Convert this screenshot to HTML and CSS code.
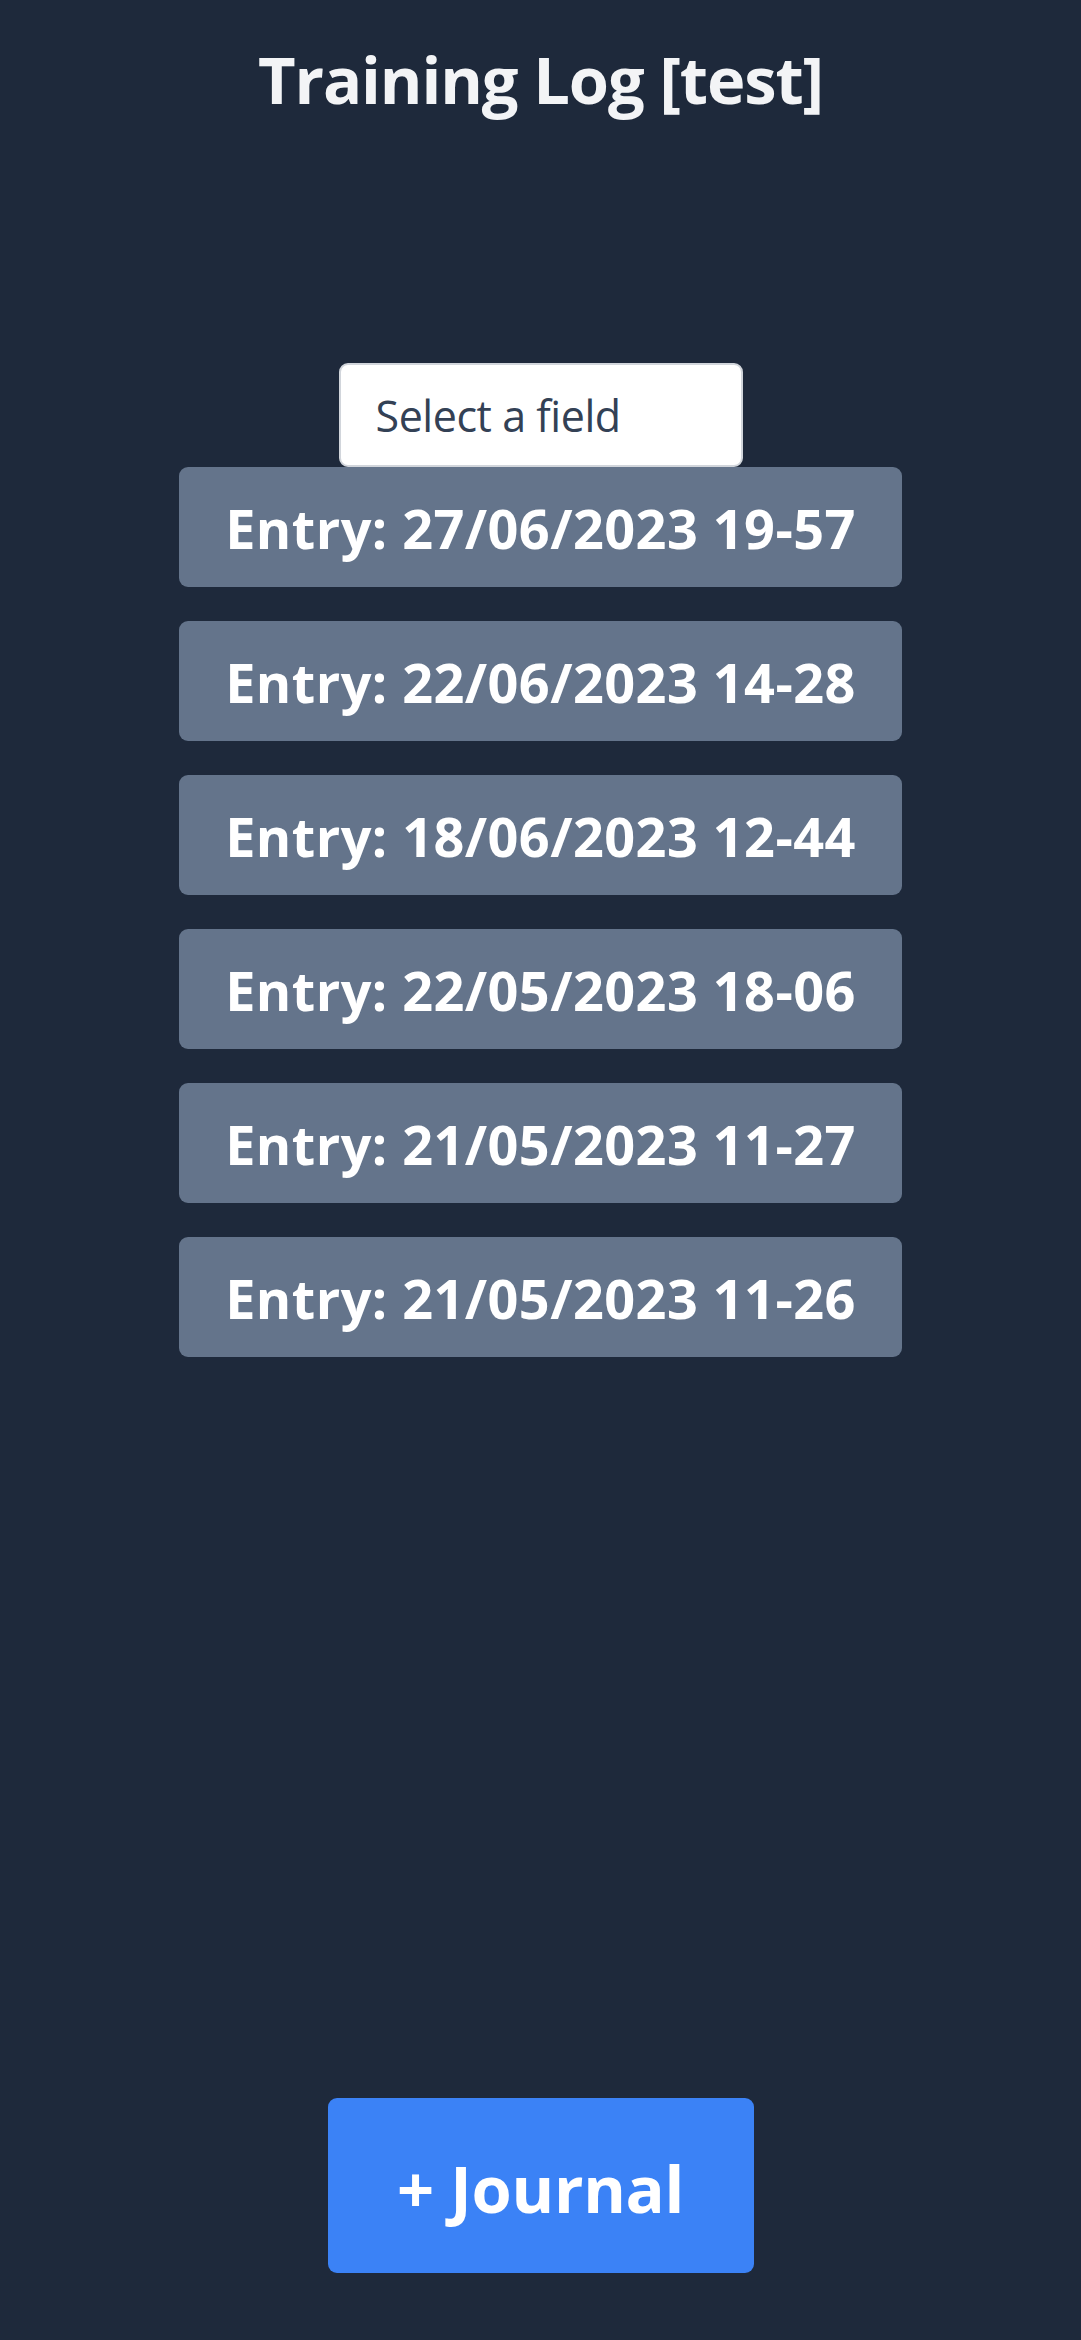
FILE: index.html
```html
<!DOCTYPE html>
<html lang="en">
<head>
<meta charset="utf-8">
<title>Training Log [test]</title>
<link rel="stylesheet" href="styles.css">
</head>
<body>
<div class="app">
  <h1 class="title">Training Log [test]</h1>
  <select class="field-select">
    <option>Select a field</option>
  </select>
  <ul class="entries">
    <li class="entry">Entry: 27/06/2023 19-57</li>
    <li class="entry">Entry: 22/06/2023 14-28</li>
    <li class="entry">Entry: 18/06/2023 12-44</li>
    <li class="entry">Entry: 22/05/2023 18-06</li>
    <li class="entry">Entry: 21/05/2023 11-27</li>
    <li class="entry">Entry: 21/05/2023 11-26</li>
  </ul>
  <button class="journal-btn">+ Journal</button>
</div>
</body>
</html>
```

FILE: styles.css
```css
html, body {
  margin: 0;
  padding: 0;
  background: #1e293b;
}

body {
  font-family: "Open Sans", "Noto Sans", sans-serif;
}

.app {
  min-height: 2340px;
  display: flex;
  flex-direction: column;
  align-items: center;
  box-sizing: border-box;
}

.title {
  margin: 47px 0 0;
  font-size: 65px;
  line-height: 65px;
  letter-spacing: -1.1px;
  font-weight: 700;
  color: #f3f4f6;
}

.field-select {
  margin-top: 251px;
  width: 404px;
  height: 104px;
  box-sizing: border-box;
  appearance: none;
  -webkit-appearance: none;
  background: #ffffff;
  border: 2px solid #d1d5db;
  border-radius: 9px;
  padding: 0 0 0 35px;
  font-family: "Open Sans", "Noto Sans", sans-serif;
  font-size: 43px;
  letter-spacing: -0.45px;
  color: #334155;
  outline: none;
}

.entries {
  list-style: none;
  margin: 0;
  padding: 0;
  display: flex;
  flex-direction: column;
  gap: 34px;
}

.entry {
  width: 723px;
  height: 120px;
  box-sizing: border-box;
  padding-top: 2px;
  display: flex;
  align-items: center;
  justify-content: center;
  background: #64748b;
  border-radius: 9px;
  color: #ffffff;
  font-size: 54px;
  font-weight: 700;
  letter-spacing: 0.45px;
  line-height: 1;
}

.journal-btn {
  margin-top: auto;
  margin-bottom: 67px;
  width: 426px;
  height: 175px;
  padding: 6px 0 0;
  border: none;
  border-radius: 9px;
  background: #3b82f6;
  color: #ffffff;
  font-family: "Open Sans", "Noto Sans", sans-serif;
  font-size: 65px;
  letter-spacing: -0.3px;
  font-weight: 700;
  line-height: 1;
}
```
